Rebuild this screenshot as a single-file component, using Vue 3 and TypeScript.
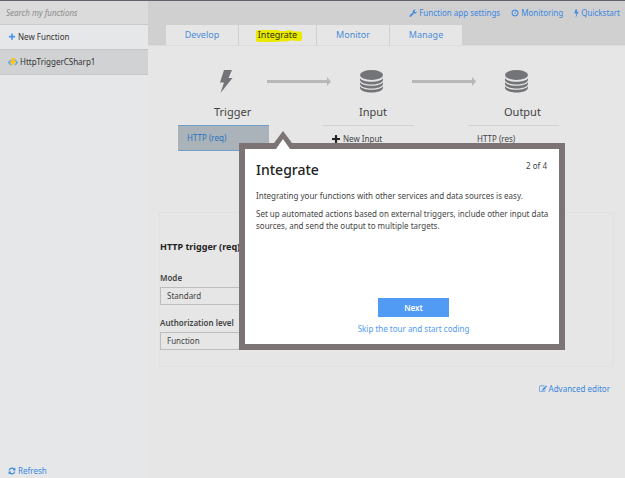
<script setup lang="ts">
import { ref } from 'vue'

interface HeaderLink {
  label: string
  icon: string
}

const icons: Record<string, string> = {
  wrench:
    'M448 1472q0-26-19-45t-45-19-45 19-19 45 19 45 45 19 45-19 19-45zm644-420l-682 682q-37 37-90 37-52 0-91-37l-106-108q-38-36-38-90 0-53 38-91l681-681q39 98 114.5 173.5t173.5 114.5zm634-435q0 39-23 106-47 134-164.5 217.5t-258.5 83.5q-185 0-316.5-131.5t-131.5-316.5 131.5-316.5 316.5-131.5q58 0 121.5 16.5t107.5 46.5q16 11 16 28t-16 28l-293 169v224l193 107q5-3 79-48.5t135.5-81 70.5-35.5q15 0 23.5 10t8.5 25z',
  clock:
    'M1024 544v448q0 14-9 23t-23 9h-320q-14 0-23-9t-9-23v-64q0-14 9-23t23-9h224v-352q0-14 9-23t23-9h64q14 0 23 9t9 23zm416 352q0-148-73-273t-198-198-273-73-273 73-198 198-73 273 73 273 198 198 273 73 273-73 198-198 73-273zm224 0q0 209-103 385.5t-279.5 279.5-385.5 103-385.5-103-279.5-279.5-103-385.5 103-385.5 279.5-279.5 385.5-103 385.5 103 279.5 279.5 103 385.5z',
  bolt:
    'M1333 566q18 20 7 44l-540 1157q-13 25-42 25-4 0-14-2-17-5-25.5-19t-4.5-30l197-808-406 101q-4 1-12 1-18 0-31-11-18-15-13-39l201-825q4-14 16-23t28-9h328q19 0 32 12.5t13 29.5q0 8-5 18l-171 463 396-98q8-2 12-2 19 0 34 15z',
  plus:
    'M1600 736v192q0 40-28 68t-68 28h-416v416q0 40-28 68t-68 28h-192q-40 0-68-28t-28-68v-416h-416q-40 0-68-28t-28-68v-192q0-40 28-68t68-28h416v-416q0-40 28-68t68-28h192q40 0 68 28t28 68v416h416q40 0 68 28t28 68z',
  refresh:
    'M1639 1056q0 5-1 7-64 268-268 434.5t-478 166.5q-146 0-282.5-55t-243.5-157l-129 129q-19 19-45 19t-45-19-19-45v-448q0-26 19-45t45-19h448q26 0 45 19t19 45-19 45l-137 137q71 66 161 102t187 36q134 0 250-65t186-179q11-17 53-117 8-23 30-23h192q13 0 22.5 9.5t9.5 22.5zm25-800v448q0 26-19 45t-45 19h-448q-26 0-45-19t-19-45 19-45l138-138q-148-137-349-137-134 0-250 65t-186 179q-11 17-53 117-8 23-30 23h-199q-13 0-22.5-9.5t-9.5-22.5v-7q65-268 270-434.5t480-166.5q146 0 284 55.5t245 156.5l130-129q19-19 45-19t45 19 19 45z',
  edit:
    'M888 1184l116-116-152-152-116 116v56h96v96h56zm440-720q-16-16-33 1l-350 350q-17 17-1 33t33-1l350-350q17-17 1-33zm80 594v190q0 119-84.5 203.5t-203.5 84.5h-832q-119 0-203.5-84.5t-84.5-203.5v-832q0-119 84.5-203.5t203.5-84.5h832q63 0 117 25 15 7 18 23 3 17-9 29l-49 49q-14 14-32 8-23-6-45-6h-832q-66 0-113 47t-47 113v832q0 66 47 113t113 47h832q66 0 113-47t47-113v-126q0-13 9-22l64-64q15-15 35-7t20 29zm-96-738l288 288-672 672h-288v-288zm444 132l-92 92-288-288 92-92q28-28 68-28t68 28l152 152q28 28 28 68t-28 68z',
}

const headerLinks: HeaderLink[] = [
  { label: 'Function app settings', icon: 'wrench' },
  { label: 'Monitoring', icon: 'clock' },
  { label: 'Quickstart', icon: 'bolt' },
]

const tabs: string[] = ['Develop', 'Integrate', 'Monitor', 'Manage']
const activeTab = ref('Integrate')
const search = ref('')
const mode = ref('Standard')
const authLevel = ref('Function')
const tourOpen = ref(true)
</script>

<template>
  <div class="app">
    <aside class="sidebar">
      <input v-model="search" class="search" type="text" aria-label="Search my functions" placeholder="Search my functions" />
      <button class="side-item" type="button">
        <svg class="icon blue" viewBox="0 0 1792 1792"><path :d="icons.plus" /></svg>
        New Function
      </button>
      <button class="side-item selected" type="button">
        <svg class="fn-icon" viewBox="0 0 20 18">
          <path d="M6 4L1.500 9L6 14M14 4L18.500 9L14 14" fill="none" stroke="#5aa9dc" stroke-width="2.600" />
          <path d="M8 0h7l-3 6h5L6 18l2-8H4z" fill="#fbc21c" />
        </svg>
        HttpTriggerCSharp1
      </button>
      <a class="link refresh" href="#">
        <svg class="icon" viewBox="0 0 1792 1792"><path :d="icons.refresh" /></svg>
        Refresh
      </a>
    </aside>

    <main class="main">
      <header class="header">
        <nav class="links">
          <a v-for="l in headerLinks" :key="l.label" class="link" href="#">
            <svg class="icon" :class="l.icon" :viewBox="l.icon === 'bolt' ? '400 0 1000 1792' : '0 0 1792 1792'"><path :d="icons[l.icon]" /></svg>
            {{ l.label }}
          </a>
        </nav>
        <div class="tabs" role="tablist">
          <button
            v-for="t in tabs"
            :key="t"
            type="button"
            role="tab"
            class="tab"
            :class="{ active: t === activeTab }"
            :aria-selected="t === activeTab"
            @click="activeTab = t"
          >
            <svg v-if="t === activeTab" class="marker" viewBox="0 0 46 12" preserveAspectRatio="none">
              <path d="M0 1Q1 0 4 0H22L24 1H30L32 0L39 1.500H45Q46 2 46 4V10Q46 11 44 11L34 10.500L31 11.500H22L20 12H3Q0 12 0 10Z" fill="#eaea00" />
            </svg>
            <span>{{ t }}</span>
          </button>
        </div>
      </header>

      <section class="diagram">
        <div class="flow">
          <svg class="flow-icon" viewBox="0 0 25 25"><path d="M10 1H18L14.500 9H18.500L6.500 24L10 13.500H6Z" /></svg>
          <svg class="arrow" viewBox="0 0 64 9"><path d="M0 3H60V0L64 4.500L60 9V6H0Z" /></svg>
          <svg class="flow-icon" viewBox="0 0 25 25">
            <ellipse cx="12.500" cy="6" rx="11.500" ry="5" />
            <path v-for="y in [9, 13, 17]" :key="y" :d="`M1 ${y}C3 ${y + 5} 22 ${y + 5} 24 ${y}V${y + 2}C23 ${y + 8} 2 ${y + 8} 1 ${y + 2}Z`" />
          </svg>
          <svg class="arrow" viewBox="0 0 64 9"><path d="M0 3H60V0L64 4.500L60 9V6H0Z" /></svg>
          <svg class="flow-icon" viewBox="0 0 25 25">
            <ellipse cx="12.500" cy="6" rx="11.500" ry="5" />
            <path v-for="y in [9, 13, 17]" :key="y" :d="`M1 ${y}C3 ${y + 5} 22 ${y + 5} 24 ${y}V${y + 2}C23 ${y + 8} 2 ${y + 8} 1 ${y + 2}Z`" />
          </svg>
        </div>
        <div class="columns">
          <div class="column">
            <h2>Trigger</h2>
            <button type="button" class="binding chosen">HTTP (req)</button>
          </div>
          <div class="column">
            <h2>Input</h2>
            <button type="button" class="binding">
              <svg class="icon" viewBox="192 128 1408 1408"><path :d="icons.plus" /></svg>
              New Input
            </button>
          </div>
          <div class="column">
            <h2>Output</h2>
            <button type="button" class="binding">HTTP (res)</button>
          </div>
        </div>
      </section>

      <section class="settings">
        <h3>HTTP trigger (req)</h3>
        <div class="field">
          <label for="mode">Mode</label>
          <select id="mode" v-model="mode">
            <option>Standard</option>
          </select>
        </div>
        <div class="field">
          <label for="auth">Authorization level</label>
          <select id="auth" v-model="authLevel">
            <option>Function</option>
          </select>
        </div>
      </section>

      <a class="link advanced" href="#">
        <svg class="icon" viewBox="0 0 1792 1792"><path :d="icons.edit" /></svg>
        Advanced editor
      </a>

      <div v-if="tourOpen" class="tour" role="dialog" aria-labelledby="tour-title">
        <svg class="pointer" viewBox="0 0 18 19">
          <path d="M0 12L9 0L18 12V18H0Z" fill="#7b7374" />
          <path d="M2 18L9 8L16 18V19H2Z" fill="#fff" />
        </svg>
        <div class="tour-head">
          <h1 id="tour-title">Integrate</h1>
          <span>2 of 4</span>
        </div>
        <p>Integrating your functions with other services and data sources is easy.</p>
        <p>Set up automated actions based on external triggers, include other input data sources, and send the output to multiple targets.</p>
        <div class="tour-foot">
          <button type="button" class="next">Next</button>
          <a class="link" href="#" @click.prevent="tourOpen = false">Skip the tour and start coding</a>
        </div>
      </div>
    </main>
  </div>
</template>

<style>
body {
  background: #e6e6e6;
}
</style>

<style scoped>
* {
  box-sizing: border-box;
}
.app {
  display: flex;
  min-height: 100vh;
  border-top: 1px solid #62636c;
  font: 8px/12px "Noto Sans", "Open Sans", sans-serif;
  color: #444;
}
button,
input,
select {
  font: inherit;
  color: inherit;
  border: 0;
  border-radius: 0;
  margin: 0;
  background: none;
}
h1,
h2,
h3,
p {
  margin: 0;
  font-weight: 400;
}
.icon {
  width: 8px;
  height: 8px;
  flex: none;
  fill: currentColor;
}
.icon.bolt {
  width: 5px;
}
.blue {
  color: #4a96f0;
}
.link {
  display: flex;
  align-items: center;
  gap: 2px;
  color: #3b87e0;
  text-decoration: none;
}

.sidebar {
  width: 148px;
  flex: none;
  display: flex;
  flex-direction: column;
  background: #e5e7e8;
}
.search {
  height: 24px;
  padding: 0 6px;
  background: #dbdbdb;
  border-bottom: 1px solid #c9cacb;
  font-style: italic;
  outline: none;
}
.search::placeholder {
  color: #8b8b8b;
  opacity: 1;
}
.side-item {
  display: flex;
  align-items: center;
  gap: 2px;
  height: 24px;
  padding: 0 8px;
  color: #333;
}
.side-item.selected {
  height: 26px;
  background: #d0d2d3;
  border-top: 1px solid #c4c6c7;
  border-bottom: 1px solid #c4c6c7;
}
.fn-icon {
  width: 10px;
  height: 9px;
}
.refresh {
  margin-top: auto;
  padding: 0 8px 1px;
}

.main {
  flex: 1;
  position: relative;
  display: flex;
  flex-direction: column;
}
.header {
  background: #d0d0d0;
  border-bottom: 1px solid #dcdcdc;
}
.links {
  display: flex;
  justify-content: flex-end;
  gap: 11px;
  height: 24px;
  padding-right: 5px;
}
.tabs {
  display: flex;
  padding-left: 18px;
}
.tab {
  position: relative;
  width: 73px;
  height: 20px;
  padding: 0;
  background: #e6e6e6;
  border-right: 1px solid #d0d0d0;
  font-size: 9px;
  color: #4d8cd9;
}
.tab.active {
  width: 78px;
  margin-bottom: -1px;
  color: #333300;
}
.tab span {
  position: relative;
}
.marker {
  position: absolute;
  left: 17px;
  top: 5px;
  width: 46px;
  height: 12px;
}

.diagram {
  padding: 23px 30px 0;
}
.flow {
  display: flex;
  align-items: center;
  gap: 28px;
  padding-left: 36px;
}
.flow-icon {
  width: 25px;
  height: 25px;
  flex: none;
  fill: #737477;
}
.arrow {
  width: 64px;
  height: 9px;
  flex: none;
  fill: #b8b8b8;
}
.columns {
  display: flex;
  gap: 54px;
  padding-top: 10px;
}
.column {
  width: 91px;
  flex: none;
}
h2 {
  padding-left: 36px;
  font-size: 11px;
  line-height: 16px;
  margin-bottom: 5px;
}
.binding {
  display: flex;
  align-items: center;
  gap: 3px;
  width: 100%;
  height: 26px;
  padding: 0 9px;
  border-top: 1px solid #d2d2d2;
}
.binding .icon {
  color: #222;
}
.binding.chosen {
  background: #abb3ba;
  border-top: 1px solid #6f9fc9;
  border-bottom: 1px solid #6f9fc9;
  color: #2a72bd;
}

.settings {
  margin: 61px 11px 0;
  padding: 26px 0 16px;
  border: 1px solid #e1e1e1;
}
h3 {
  margin-bottom: 17px;
  font-size: 9px;
  line-height: 16px;
  font-weight: 700;
  color: #222;
}
.field {
  display: flex;
  flex-direction: column;
  gap: 3px;
  margin-bottom: 12px;
}
.field:last-child {
  margin-bottom: 0;
}
label {
  font-weight: 600;
}
select {
  appearance: none;
  width: 160px;
  height: 18px;
  padding: 0 6px;
  border: 1px solid #bdbdbd;
}
.advanced {
  align-self: flex-end;
  margin: 16px 15px 0 0;
}

.tour {
  position: absolute;
  left: 91px;
  top: 142px;
  width: 326px;
  min-height: 207px;
  padding: 11px 8px 9px 11px;
  display: flex;
  flex-direction: column;
  background: #fff;
  border: 6px solid #7b7374;
}
.pointer {
  position: absolute;
  left: 29px;
  top: -18px;
  width: 18px;
  height: 19px;
}
.tour-head {
  display: flex;
  justify-content: space-between;
  margin-bottom: 10px;
  padding-right: 4px;
}
h1 {
  font-size: 14px;
  line-height: 20px;
  font-weight: 500;
  color: #222;
}
p {
  margin-bottom: 6px;
}
.tour-foot {
  display: flex;
  flex-direction: column;
  align-items: center;
  gap: 6px;
  margin-top: auto;
  padding-left: 20px;
}
.tour-foot .link {
  color: #529bf5;
}
.next {
  width: 71px;
  height: 19px;
  background: #529bf5;
  color: #fff;
  font-weight: 600;
}
</style>
